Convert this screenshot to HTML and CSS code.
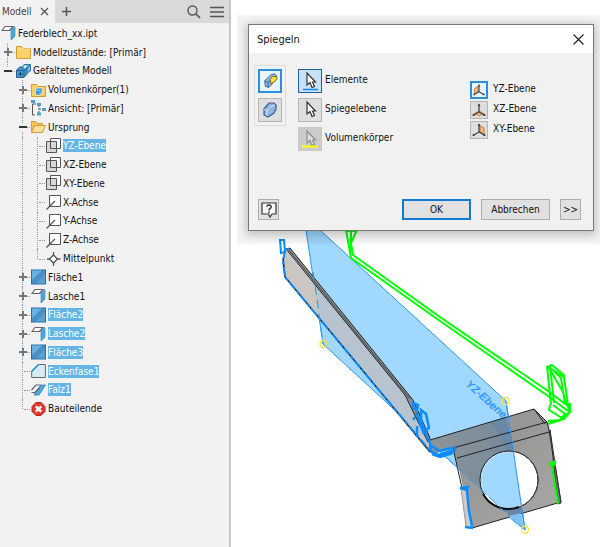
FILE: index.html
```html
<!DOCTYPE html>
<html lang="de">
<head>
    <meta charset="UTF-8">
    <meta name="viewport" content="width=device-width, initial-scale=1.0">
    <title>Federblech_xx.ipt</title>
    <link rel="stylesheet" href="styles.css">
</head>
<body>
    <!-- icons used more than once -->
    <svg class="sprite" aria-hidden="true">
        <symbol id="i-flange" viewBox="0 0 15 16">
            <path d="M1 5.500L4 1.500H12L8.500 5.500Z" fill="#fff" stroke="#666" stroke-width="1.200"/>
            <path d="M9.500 5L14 1.500V11L10 15V6Z" fill="#4aa8de" stroke="#2c84bd" stroke-width=".6"/>
        </symbol>
        <symbol id="i-face" viewBox="0 0 15 16">
            <rect x=".5" y="1" width="14" height="14" fill="#4a90c8" stroke="#2c6ea3"/>
            <path d="M1 1.500H11L1 11Z" fill="#69b2df"/>
            <path d="M14 5V14.500H5Z" fill="#5b9ed0"/>
        </symbol>
        <symbol id="i-plane" viewBox="0 0 15 16">
            <path d="M4.500 .5H14.500V10.500H4.500Z" fill="#fafafa" stroke="#555"/>
            <path d="M.5 3.500H10.500V14.500H.5Z" fill="#ccc" fill-opacity=".75" stroke="#555"/>
            <path d="M4.500 4V10.500H10.500" fill="none" stroke="#555"/>
        </symbol>
        <symbol id="i-axis" viewBox="0 0 15 16">
            <path d="M3.500 1.500H14.500V12.500H3.500Z" fill="#fff" stroke="#555"/>
            <path d="M.5 15.500L9 7" stroke="#555" stroke-width="1.300"/>
        </symbol>
        <symbol id="i-cursor" viewBox="0 0 22 22">
            <path d="M8 3V15L11 12.500L13 17.500L15.500 16.500L13.500 12H16.500Z" fill="#fff" stroke="#333" stroke-width="1.200"/>
        </symbol>
        <symbol id="i-triad" viewBox="0 0 16 16">
            <path d="M8 10V2M8 10L2 13.500M8 10L14 13.500" fill="none" stroke="#444" stroke-width="1.300"/>
            <path d="M6.500 4L8 1.500L9.500 4ZM2 11.500L1.500 14L4 14ZM14 11.500L14.500 14L12 14Z" fill="#444"/>
        </symbol>
    </svg>

    <div class="app">
        <aside class="browser">
            <div class="tabs">
                <div class="tab">
                    <span>Modell</span>
                    <button class="icon-btn" aria-label="Schließen"><svg width="9" height="9" viewBox="0 0 9 9"><path d="M1 1L8 8M8 1L1 8" stroke="#555" stroke-width="1.300"/></svg></button>
                </div>
                <button class="icon-btn add" aria-label="Hinzufügen"><svg width="11" height="11" viewBox="0 0 11 11"><path d="M5.500 1V10M1 5.500H10" stroke="#555" stroke-width="1.500"/></svg></button>
                <button class="icon-btn search" aria-label="Suchen"><svg width="14" height="14" viewBox="0 0 14 14"><circle cx="5.500" cy="5.500" r="4.500" fill="none" stroke="#555" stroke-width="1.400"/><path d="M9 9L13 13" stroke="#555" stroke-width="1.700"/></svg></button>
                <button class="icon-btn" aria-label="Menü"><svg width="14" height="12" viewBox="0 0 14 12"><path d="M0 1.500H14M0 6H14M0 10.500H14" stroke="#555" stroke-width="1.500"/></svg></button>
            </div>

            <ul class="tree">
                <li><svg class="icon"><use href="#i-flange"/></svg><span>Federblech_xx.ipt</span></li>
                <li>
                    <i class="line node"><button class="plus" aria-label="Aufklappen"></button></i>
                    <svg class="icon" viewBox="0 0 15 16"><path d="M.5 2.500H5.500L7 4.500H14.500V14.500H.5Z" fill="#fbd168" stroke="#cf9c35"/><path d="M1 5H14" stroke="#fbe3a0"/></svg>
                    <span>Modellzustände: [Primär]</span>
                </li>
                <li>
                    <i class="line node last"><button class="minus" aria-label="Zuklappen"></button></i>
                    <svg class="icon" viewBox="0 0 15 16"><path d="M.5 7L4 4H11V11L8 14.500H.5Z" fill="#4496cc" stroke="#205e8d"/><path d="M6 5L8 1.500H14.500V8L11 10V5Z" fill="#75bde6" stroke="#2b78ad"/><path d="M11 5L14 2M1 7.500H8V14M8 7L11 4.500" stroke="#205e8d" fill="none"/><path d="M4.500 9V13M2.500 11H6.500" stroke="#123f60"/><circle cx="9" cy="4" r="1.500" fill="#d8eefb"/></svg>
                    <span>Gefaltetes Modell</span>
                </li>
                <li>
                    <i class="line blank"></i><i class="line node"><button class="plus" aria-label="Aufklappen"></button></i>
                    <svg class="icon" viewBox="0 0 15 16"><path d="M.5 2.500H5.500L7 4.500H14.500V14.500H.5Z" fill="#fbd168" stroke="#cf9c35"/><path d="M4.500 8L6.500 6H11V11L9 13H4.500Z" fill="#3b99d8" stroke="#d9effb" stroke-width=".7"/><path d="M5 8.500H9V12.500" fill="none" stroke="#86c8ef"/></svg>
                    <span>Volumenkörper(1)</span>
                </li>
                <li>
                    <i class="line blank"></i><i class="line node"><button class="plus" aria-label="Aufklappen"></button></i>
                    <svg class="icon" viewBox="0 0 15 16"><path d="M5 4H1.500V15H4" fill="none" stroke="#555"/><path d="M8 5V13.500M8 9H11" stroke="#555" stroke-dasharray="2 1" fill="none"/><path d="M0 0H4V3H0ZM6 3H10V6H6ZM11 8H15V11H11ZM6 12.500H10V15.500H6Z" fill="#4c9ed6"/></svg>
                    <span>Ansicht: [Primär]</span>
                </li>
                <li>
                    <i class="line blank"></i><i class="line node"><button class="minus" aria-label="Zuklappen"></button></i>
                    <svg class="icon" viewBox="0 0 15 16"><path d="M.5 13.500V2.500H5L6.500 4.500H11.500V7" fill="#f5c558" stroke="#cf9c35"/><path d="M.5 13.500L3.500 6.500H14.500L11.500 13.500Z" fill="#fde09a" stroke="#cf9c35"/></svg>
                    <span>Ursprung</span>
                </li>
                <li><i class="line blank"></i><i class="line"></i><i class="line node"></i><svg class="icon"><use href="#i-plane"/></svg><span class="selected">YZ-Ebene</span></li>
                <li><i class="line blank"></i><i class="line"></i><i class="line node"></i><svg class="icon"><use href="#i-plane"/></svg><span>XZ-Ebene</span></li>
                <li><i class="line blank"></i><i class="line"></i><i class="line node"></i><svg class="icon"><use href="#i-plane"/></svg><span>XY-Ebene</span></li>
                <li><i class="line blank"></i><i class="line"></i><i class="line node"></i><svg class="icon"><use href="#i-axis"/></svg><span>X-Achse</span></li>
                <li><i class="line blank"></i><i class="line"></i><i class="line node"></i><svg class="icon"><use href="#i-axis"/></svg><span>Y-Achse</span></li>
                <li><i class="line blank"></i><i class="line"></i><i class="line node"></i><svg class="icon"><use href="#i-axis"/></svg><span>Z-Achse</span></li>
                <li>
                    <i class="line blank"></i><i class="line"></i><i class="line node last"></i>
                    <svg class="icon" viewBox="0 0 15 16"><path d="M7.500 4L11.500 8L7.500 12L3.500 8Z" fill="#fff" stroke="#555" stroke-width="1.300"/><path d="M7.500 1V5M7.500 11V15M1 8H4M11 8H14.500" stroke="#555" stroke-width="1.300"/></svg>
                    <span>Mittelpunkt</span>
                </li>
                <li><i class="line blank"></i><i class="line node"><button class="plus" aria-label="Aufklappen"></button></i><svg class="icon"><use href="#i-face"/></svg><span>Fläche1</span></li>
                <li><i class="line blank"></i><i class="line node"><button class="plus" aria-label="Aufklappen"></button></i><svg class="icon"><use href="#i-flange"/></svg><span>Lasche1</span></li>
                <li><i class="line blank"></i><i class="line node"><button class="plus" aria-label="Aufklappen"></button></i><svg class="icon"><use href="#i-face"/></svg><span class="selected">Fläche2</span></li>
                <li><i class="line blank"></i><i class="line node"><button class="plus" aria-label="Aufklappen"></button></i><svg class="icon"><use href="#i-flange"/></svg><span class="selected">Lasche2</span></li>
                <li><i class="line blank"></i><i class="line node"><button class="plus" aria-label="Aufklappen"></button></i><svg class="icon"><use href="#i-face"/></svg><span class="selected">Fläche3</span></li>
                <li>
                    <i class="line blank"></i><i class="line node"></i>
                    <svg class="icon" viewBox="0 0 15 16"><path d="M.7 14.500V8L7.500 1.500H14.400V14.500Z" fill="#d6eaf7" stroke="#666"/><path d="M.7 8.500L7.500 1.500" stroke="#1f93dc" stroke-width="1.600"/></svg>
                    <span class="selected">Eckenfase1</span>
                </li>
                <li>
                    <i class="line blank"></i><i class="line node"></i>
                    <svg class="icon" viewBox="0 0 15 16"><path d="M.5 8L5 3H10" fill="none" stroke="#666" stroke-width="1.200"/><path d="M5 9L10 3H14.500L8 13H3Z" fill="#4aa8e2" stroke="#2377ad" stroke-width=".7"/><path d="M.5 10.500H4L9 5.500" fill="none" stroke="#666" stroke-width="1.200"/></svg>
                    <span class="selected">Falz1</span>
                </li>
                <li>
                    <i class="line blank"></i><i class="line node last"></i>
                    <svg class="icon" viewBox="0 0 15 16"><path d="M5 1.500H10L14 5.500V10.500L10 14.500H5L1 10.500V5.500Z" fill="#e0392d" stroke="#b8241b"/><path d="M4.800 5.300L10.200 10.700M10.200 5.300L4.800 10.700" stroke="#fff" stroke-width="2.400"/></svg>
                    <span>Bauteilende</span>
                </li>
            </ul>
        </aside>

        <main class="viewport">
            <svg class="model" viewBox="231 0 369 547" aria-label="Federblech">
                <defs>
                    <linearGradient id="shade" x1="0" x2="1"><stop offset="0" stop-color="#8d9499"/><stop offset="1" stop-color="#72889b"/></linearGradient>
                    <linearGradient id="steel" x1="0" x2="1" y1="0" y2="1"><stop offset="0" stop-color="#8b8b8b"/><stop offset="1" stop-color="#aaa9a8"/></linearGradient>
                    <clipPath id="hole"><circle cx="509" cy="480" r="28"/></clipPath>
                    <clipPath id="plane"><path d="M306 222L505 401L525 530L323 344Z"/></clipPath>
                </defs>

                <!-- work plane -->
                <path d="M306 230L320 230L506 401L525 530L323 344Z" fill="#a0d8ff" stroke="#2e97ef"/>

                <!-- long flange -->
                <path d="M285 249L406 396L430 440L430 452L383 395L285 277L283 262Z" fill="#c9c6c4"/>
                <path d="M285 249L406 396L430 440L430 452L383 395L285 277L283 262Z" fill="#b7c4cf" clip-path="url(#plane)"/>
                <path d="M286 249L290 248L413 400L430 438L428 442L405 395Z" fill="#8d9296" stroke="#222" stroke-width="1"/>
                <path d="M288 249L410 399" stroke="#444" stroke-width="1"/>
                <path d="M283 258L285 277L383 395L430 452" fill="none" stroke="#222" stroke-width="1.500"/>
                <path d="M285 250L283 262L285 277L383 395L432 453" fill="none" stroke="#0a8cff" stroke-width="2" stroke-dasharray="9 2 4 2"/>
                <path d="M313 272L318 306L323 344" fill="none" stroke="#2e97ef" stroke-dasharray="9 5"/>
                <path d="M280 240H284L285 252L281 253Z M285 249H289" fill="none" stroke="#0a8cff" stroke-width="2"/>

                <!-- bottom plate -->
                <path d="M430 440L534 409L547 422L550 430L561 502L472 528L457 460L453 448L433 454Z" fill="url(#steel)"/>
                <path d="M430 440L506 418L516 470L522 513L505 512L457 466L453 448L433 454Z" fill="url(#shade)"/>
                <path d="M488 423L506 417L514 450L505 451C505 438 498 429 488 423Z" fill="#6888a5"/>
                <path d="M505 507L520 502L522 514L509 517Z" fill="#6888a5"/>
                <circle cx="509" cy="480" r="29" fill="#fff" stroke="#111" stroke-width="1"/>
                <path d="M506 401L525 530L323 344Z" fill="#a0d8ff" clip-path="url(#hole)"/>
                <path d="M522 454A29 29 0 0 1 520 507" fill="none" stroke="#444"/>
                <path d="M483 494A29 29 0 0 0 519 507" fill="none" stroke="#111" stroke-width="2"/>
                <path d="M430 440L534 409L547 422L549 430L561 502L472 528M453 448L547 422M457 458L549 432M453 448L462 488L472 528M534 409L545 424" fill="none" stroke="#222"/>
                <path d="M550 430L558 504L561 503L550 430" fill="#777" stroke="#333"/>
                <path d="M461 489L466 526L472 528L467 489Z" fill="#ccc" stroke="#999"/>
                <path d="M506 401L525 530L509 517" fill="none" stroke="#2795f2"/>
                <path d="M445 456L505 512" stroke="#2795f2" stroke-dasharray="12 3"/>
                <path d="M509 516L521 513L524 529Z" fill="#7fc3f5"/>

                <!-- highlighted bend edges -->
                <path d="M413 403L418 405L417 410L413 408ZM421 410L426 414L429 428L425 431L421 420ZM416 412L419 420L424 434M417 426V437M414 417V420M424 430L430 443L431 451L438 455L455 450V446M432 446L439 451L452 448M432 454L440 457L453 453" fill="none" stroke="#0a8cff" stroke-width="2.500"/>
                <path d="M460 488L468 487L467 490ZM467 491L469 511L472 526M465 527L473 528" fill="none" stroke="#0a8cff" stroke-width="2.500"/>
                <text class="plane-name" transform="translate(465 385) rotate(42)">YZ-Ebene</text>

                <!-- preview of the mirrored part -->
                <g fill="none" stroke="#0f0" stroke-width="2" stroke-linejoin="round">
                    <path d="M346 230L351 258L440 321L548 396L568 411M350 238L353 255L440 317L548 391L568 406M357 230L350 245M351 230V252M347 231H357"/>
                    <path d="M547 366L551 405M550 366L554 403M547 366L564 377L569 412M549 368L563 392L566 404M552 369L561 378L565 404M549 366L552 365L565 376"/>
                    <path d="M550 405L549 410L562 418L568 413M553 405L565 414M570 403V412L564 419L548 424M566 413L560 420L548 421"/>
                    <path d="M549 466L555 461V465L549 463M552 466L558 504"/>
                </g>
                <g fill="none" stroke="#f7df35" stroke-width="1.300">
                    <circle cx="323.500" cy="344" r="3.500"/><circle cx="505.500" cy="401" r="3.500"/><circle cx="525" cy="529.500" r="3.500"/>
                </g>
            </svg>

            <section class="dialog" role="dialog" aria-labelledby="dialog-title">
                <header class="titlebar">
                    <span id="dialog-title">Spiegeln</span>
                    <button class="icon-btn" aria-label="Schließen"><svg width="11" height="11" viewBox="0 0 11 11"><path d="M.5 .5L10.500 10.500M10.500 .5L.5 10.500" stroke="#222" stroke-width="1.200"/></svg></button>
                </header>
                <div class="options">
                    <div class="modes">
                        <button class="tool active" aria-label="Elemente spiegeln"><svg viewBox="0 0 22 22"><path d="M5 11L12 4L16 3L18 5V9L10 18L6 17Z" fill="#8fb5df" stroke="#345d91"/><path d="M6 11L9 13V18M9 13L12 9" stroke="#345d91" fill="none"/><path d="M11 9L14 6H18L19 8L16 12L12 14Z" fill="#ffe13b" stroke="#6b641b"/></svg></button>
                        <button class="tool" aria-label="Volumenkörper spiegeln"><svg viewBox="0 0 22 22"><path d="M5 10L10 4H15L17 6V10L15 14L9 18L5 16Z" fill="#8fb5df" stroke="#345d91" stroke-width="1.200"/><path d="M5 10L8 12V17M8 12L11 8L16 6" stroke="#d7e8fa" fill="none"/></svg></button>
                    </div>
                    <div class="picks">
                        <div class="row"><button class="tool picked" id="elemente"><svg viewBox="0 0 22 22"><use href="#i-cursor"/><path d="M4 19.500H19" stroke="#1687e0" stroke-width="1.500"/></svg></button><label for="elemente">Elemente</label></div>
                        <div class="row"><button class="tool" id="spiegelebene"><svg viewBox="0 0 22 22"><use href="#i-cursor"/></svg></button><label for="spiegelebene">Spiegelebene</label></div>
                        <div class="row"><button class="tool muted" id="koerper"><svg viewBox="0 0 22 22"><use href="#i-cursor" opacity=".4"/><path d="M3 18.500H19" stroke="#ff0" stroke-width="2"/></svg></button><label for="koerper">Volumenkörper</label></div>
                    </div>
                    <div class="planes">
                        <div class="row"><button class="tool small active" id="yz"><svg viewBox="0 0 16 16"><path d="M3 6L7 4V10L3 12Z" fill="#f5b988" stroke="#b77a47"/><use href="#i-triad"/></svg></button><label for="yz">YZ-Ebene</label></div>
                        <div class="row"><button class="tool small" id="xz"><svg viewBox="0 0 16 16"><path d="M8 9L13 11.500L8 14L3 11.500Z" fill="#f5b988" stroke="#d28c4f"/><use href="#i-triad"/></svg></button><label for="xz">XZ-Ebene</label></div>
                        <div class="row"><button class="tool small" id="xy"><svg viewBox="0 0 16 16"><path d="M9 4L13 6V12L9 10Z" fill="#f5b988" stroke="#b77a47"/><use href="#i-triad"/></svg></button><label for="xy">XY-Ebene</label></div>
                    </div>
                </div>
                <footer class="actions">
                    <button class="btn help" aria-label="Hilfe"><svg width="16" height="16" viewBox="0 0 16 16"><path d="M1 1H15V12H11L9 15L7.500 12H1Z" fill="#f6f8fb" stroke="#333" stroke-width="1.200"/><path d="M5.800 4.800C6 2.500 10.300 2.500 10.200 5C10.100 6.500 8 6.500 8 8.500M8 9.500V11" fill="none" stroke="#333" stroke-width="1.500"/></svg></button>
                    <button class="btn primary">OK</button>
                    <button class="btn">Abbrechen</button>
                    <button class="btn more">&gt;&gt;</button>
                </footer>
            </section>
        </main>
    </div>
</body>
</html>
```

FILE: styles.css
```css
body {
    margin: 0;
    font-family: "DejaVu Sans Condensed", "DejaVu Sans", sans-serif;
    font-size: 10px;
    color: #111;
    background: #fff;
}

button {
    font: inherit;
    color: inherit;
    padding: 0;
    margin: 0;
    box-sizing: border-box;
}

svg {
    display: block;
}

.sprite {
    position: absolute;
    width: 0;
    height: 0;
}

.app {
    display: grid;
    grid-template-columns: 231px 1fr;
    min-height: 100vh;
}

/* Model browser */
.browser {
    background: #f2f2f2;
    border-right: 2px solid #c6c6ca;
}

.tabs {
    display: flex;
    align-items: center;
    height: 23px;
    padding-right: 5px;
    background: #d9d9d9;
}

.tab {
    display: flex;
    align-items: center;
    justify-content: space-between;
    box-sizing: border-box;
    width: 55px;
    height: 100%;
    padding: 0 6px 0 2px;
    background: #f2f2f2;
    color: #444;
}

.icon-btn {
    border: none;
    background: none;
}

.add {
    margin-left: 6px;
}

.search {
    margin-left: auto;
    margin-right: 9px;
}

.tree {
    display: grid;
    grid-auto-rows: 1fr;
    height: 394px;
    margin: 0;
    padding: 1px 0 0 1px;
    list-style: none;
}

.tree li {
    display: flex;
    align-items: center;
    min-height: 0;
}

.tree span {
    margin-left: 2px;
    line-height: 13px;
    white-space: nowrap;
}

.tree .selected {
    background: #62b5e5;
    color: #fff;
}

.icon {
    width: 15px;
    height: 16px;
    flex: none;
}

/* Dotted guides between the rows */
.line {
    display: grid;
    align-items: center;
    position: relative;
    width: 15px;
    height: 100%;
    flex: none;
}

.line::before {
    content: "";
    position: absolute;
    left: 6px;
    top: 0;
    bottom: 0;
    border-left: 1px dotted #999;
}

.line.last::before {
    bottom: 50%;
}

.line.blank::before {
    display: none;
}

.node::after {
    content: "";
    position: absolute;
    left: 8px;
    right: 1px;
    top: 50%;
    border-top: 1px dotted #999;
}

.plus, .minus {
    position: relative;
    z-index: 1;
    margin-left: 3px;
    width: 8px;
    height: 8px;
    border: none;
    background: linear-gradient(#777, #777) center / 8px 2px no-repeat, linear-gradient(#777, #777) center / 2px 8px no-repeat, #f2f2f2;
}

.minus {
    background: linear-gradient(#333, #333) center / 8px 2px no-repeat, #f2f2f2;
}

/* Drawing area */
.viewport {
    position: relative;
    background: #fff;
}

.model {
    width: 100%;
}

.plane-name {
    font: italic bold 11px "Liberation Sans", sans-serif;
    fill: #2c9bfb;
}

/* Mirror dialog */
.dialog {
    position: absolute;
    left: 17px;
    right: 6px;
    top: 24px;
    display: flex;
    flex-direction: column;
    box-sizing: border-box;
    min-height: 207px;
    border: 1px solid #777;
    background: #f1f1f1;
    box-shadow: 0 2px 8px 2px rgba(0, 0, 0, 0.2), 0 2px 2px 11px rgba(0, 0, 0, 0.05);
}

.titlebar {
    display: flex;
    align-items: center;
    justify-content: space-between;
    height: 28px;
    padding: 0 9px 0 8px;
    background: #fff;
    font-size: 11px;
}

.options {
    display: flex;
    flex: 1;
    padding: 12px 0 0 5px;
}

.modes {
    display: flex;
    flex-direction: column;
    align-self: flex-start;
    gap: 5px;
    padding: 3px;
    border: 1px solid #dcdcdc;
}

.picks {
    display: flex;
    flex-direction: column;
    flex: 1;
    gap: 5px;
    padding: 4px 0 0 12px;
}

.planes {
    display: flex;
    flex-direction: column;
    gap: 2px;
    width: 123px;
    padding-top: 16px;
}

.row {
    display: flex;
    align-items: center;
    gap: 3px;
}

.planes .row {
    gap: 5px;
}

.row label {
    padding-bottom: 4px;
}

.tool {
    width: 24px;
    height: 24px;
    border: 1px solid #b5b5b5;
    background: #dedede;
}

.tool.small {
    width: 18px;
    height: 18px;
}

.tool.active {
    border: 2px solid #2b8fe0;
    background: #eaf4fc;
}

.tool.picked {
    border-color: #1d5f9c;
    background: #c8e2f5;
}

.tool.muted {
    border-color: #c8c8c8;
    background: #cbcbcb;
}

.actions {
    display: flex;
    align-items: center;
    gap: 10px;
    padding: 0 12px 10px 9px;
}

.btn {
    width: 69px;
    height: 21px;
    border: 1px solid #adadad;
    background: #e1e1e1;
}

.btn.primary {
    border: 2px solid #1279d4;
}

.btn.help {
    display: grid;
    place-items: center;
    width: 21px;
    margin-right: auto;
}

.btn.more {
    width: 21px;
}
```
